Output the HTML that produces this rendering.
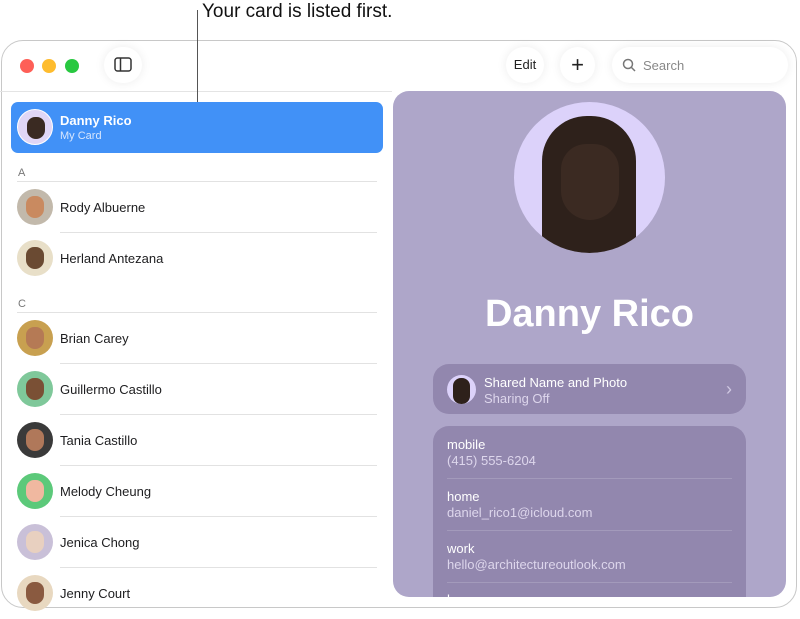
<!DOCTYPE html><html><head><style>
*{margin:0;padding:0;box-sizing:border-box}
body{width:800px;height:609px;background:#fff;font-family:"Liberation Sans",sans-serif;position:relative;overflow:hidden}
.abs{position:absolute}
.win{left:1px;top:40px;width:796px;height:568px;border:1px solid #c8c8c8;border-radius:22px;background:#fff;overflow:hidden}
.dot{width:14px;height:14px;border-radius:50%;top:59px}
.btn{background:#fff;border-radius:20px;box-shadow:0 0 10px rgba(0,0,0,.08);height:36px;top:47px}
.row{left:17px;height:51px;width:360px}
.av{width:36px;height:36px;border-radius:50%;left:0;top:7px;overflow:hidden}
.nm{left:43px;top:18px;font-size:13px;color:#1d1d1f}
.ln{left:43px;right:0;bottom:0;height:1px;background:#e2e2e2}
.sec{left:18px;font-size:11px;color:#777}
.face{position:absolute;left:9px;top:7px;width:18px;height:22px;border-radius:9px 9px 10px 10px}
.lbl{font-size:13px;color:#fff}
.val{font-size:13px;color:#ddd6ec}
</style></head><body>
<div class="abs" style="left:202px;top:1px;font-size:19px;color:#111">Your card is listed first.</div>
<div class="abs win"></div>
<div class="abs" style="left:0;top:91px;width:392px;height:1px;background:#e4e4e4"></div>
<div class="abs dot" style="left:20px;background:#fe5f57"></div>
<div class="abs dot" style="left:42px;background:#febc2e"></div>
<div class="abs dot" style="left:65px;background:#28c840"></div>
<div class="abs btn" style="left:104px;width:38px"><svg class="abs" style="left:10px;top:10px" width="18" height="15" viewBox="0 0 18 15"><rect x="1" y="1" width="16" height="13" rx="2.5" fill="none" stroke="#333" stroke-width="1.5"/><line x1="6.5" y1="1" x2="6.5" y2="14" stroke="#333" stroke-width="1.5"/></svg></div>
<div class="abs btn" style="left:506px;width:38px;font-size:13px;color:#222;text-align:center;line-height:36px">Edit</div>
<div class="abs btn" style="left:560px;width:35px;font-size:22px;color:#222;text-align:center;line-height:35px">+</div>
<div class="abs btn" style="left:612px;width:176px"><svg class="abs" style="left:10px;top:11px" width="14" height="14" viewBox="0 0 14 14"><circle cx="6" cy="6" r="4.5" fill="none" stroke="#777" stroke-width="1.5"/><line x1="9.5" y1="9.5" x2="13" y2="13" stroke="#777" stroke-width="1.5"/></svg><span class="abs" style="left:31px;top:11px;font-size:13px;color:#888">Search</span></div>
<div class="abs" style="left:11px;top:102px;width:372px;height:51px;background:#4191f7;border-radius:7px">
<div class="av abs" style="left:6px;top:7px;background:#e0d6f6;border:1px solid #fff"><div class="face" style="background:#3a2a22"></div></div>
<div class="abs" style="left:49px;top:11px;font-size:13px;font-weight:bold;color:#fff">Danny Rico</div>
<div class="abs" style="left:49px;top:28px;font-size:11px;color:#d8e6fd">My Card</div></div>
<div class="abs" style="left:197px;top:10px;width:1px;height:92px;background:#555"></div>
<div class="abs sec" style="top:167px">A</div><div class="abs" style="left:17px;top:181px;width:360px;height:1px;background:#e2e2e2"></div>
<div class="abs row" style="top:182px"><div class="av abs" style="background:#c2b9ab"><div class="face" style="background:#c98a60"></div></div><div class="abs nm">Rody Albuerne</div><div class="abs ln"></div></div>
<div class="abs row" style="top:233px"><div class="av abs" style="background:#e8dfc8"><div class="face" style="background:#6a4a32"></div></div><div class="abs nm">Herland Antezana</div></div>
<div class="abs sec" style="top:298px">C</div><div class="abs" style="left:17px;top:312px;width:360px;height:1px;background:#e2e2e2"></div>
<div class="abs row" style="top:313px"><div class="av abs" style="background:#c8a050"><div class="face" style="background:#b57a55"></div></div><div class="abs nm">Brian Carey</div><div class="abs ln"></div></div>
<div class="abs row" style="top:364px"><div class="av abs" style="background:#7fc89a"><div class="face" style="background:#7a5035"></div></div><div class="abs nm">Guillermo Castillo</div><div class="abs ln"></div></div>
<div class="abs row" style="top:415px"><div class="av abs" style="background:#3a3a3a"><div class="face" style="background:#b0785a"></div></div><div class="abs nm">Tania Castillo</div><div class="abs ln"></div></div>
<div class="abs row" style="top:466px"><div class="av abs" style="background:#5cc97a"><div class="face" style="background:#f0b8a0"></div></div><div class="abs nm">Melody Cheung</div><div class="abs ln"></div></div>
<div class="abs row" style="top:517px"><div class="av abs" style="background:#c9c0d8"><div class="face" style="background:#e8d0c0"></div></div><div class="abs nm">Jenica Chong</div><div class="abs ln"></div></div>
<div class="abs row" style="top:568px"><div class="av abs" style="background:#e8d8c0"><div class="face" style="background:#8a5a40"></div></div><div class="abs nm">Jenny Court</div></div>
<div class="abs" style="left:393px;top:91px;width:393px;height:506px;background:#aea6c9;border-radius:16px;overflow:hidden">
<div class="abs" style="left:121px;top:11px;width:151px;height:151px;border-radius:50%;background:#dcd2fa;overflow:hidden">
<div class="abs" style="left:28px;top:14px;width:94px;height:150px;border-radius:45px 45px 20px 20px;background:#2e211b"></div>
<div class="abs" style="left:47px;top:42px;width:58px;height:76px;border-radius:26px 26px 30px 30px;background:#3b2a22"></div>
</div>
<div class="abs" style="left:0;width:393px;top:202px;text-align:center;font-size:38px;font-weight:bold;color:#fff">Danny Rico</div>
<div class="abs" style="left:40px;top:273px;width:313px;height:50px;background:#9287ae;border-radius:16px">
<div class="abs" style="left:14px;top:11px;width:29px;height:29px;border-radius:50%;background:#dcd2fa;overflow:hidden"><div class="abs" style="left:6px;top:3px;width:17px;height:26px;border-radius:8px;background:#2e211b"></div></div>
<div class="abs lbl" style="left:51px;top:11px">Shared Name and Photo</div>
<div class="abs val" style="left:51px;top:27px">Sharing Off</div>
<div class="abs" style="left:293px;top:15px;font-size:18px;color:#d0c8e2">›</div></div>
<div class="abs" style="left:40px;top:335px;width:313px;height:200px;background:#9287ae;border-radius:16px">
<div class="abs lbl" style="left:14px;top:11px">mobile</div><div class="abs val" style="left:14px;top:27px">(415) 555-6204</div>
<div class="abs" style="left:14px;right:14px;top:52px;height:1px;background:#a39abb"></div>
<div class="abs lbl" style="left:14px;top:63px">home</div><div class="abs val" style="left:14px;top:79px">daniel_rico1@icloud.com</div>
<div class="abs" style="left:14px;right:14px;top:104px;height:1px;background:#a39abb"></div>
<div class="abs lbl" style="left:14px;top:115px">work</div><div class="abs val" style="left:14px;top:131px">hello@architectureoutlook.com</div>
<div class="abs" style="left:14px;right:14px;top:156px;height:1px;background:#a39abb"></div>
<div class="abs lbl" style="left:14px;top:166px">h</div>
</div></div>
</body></html>
